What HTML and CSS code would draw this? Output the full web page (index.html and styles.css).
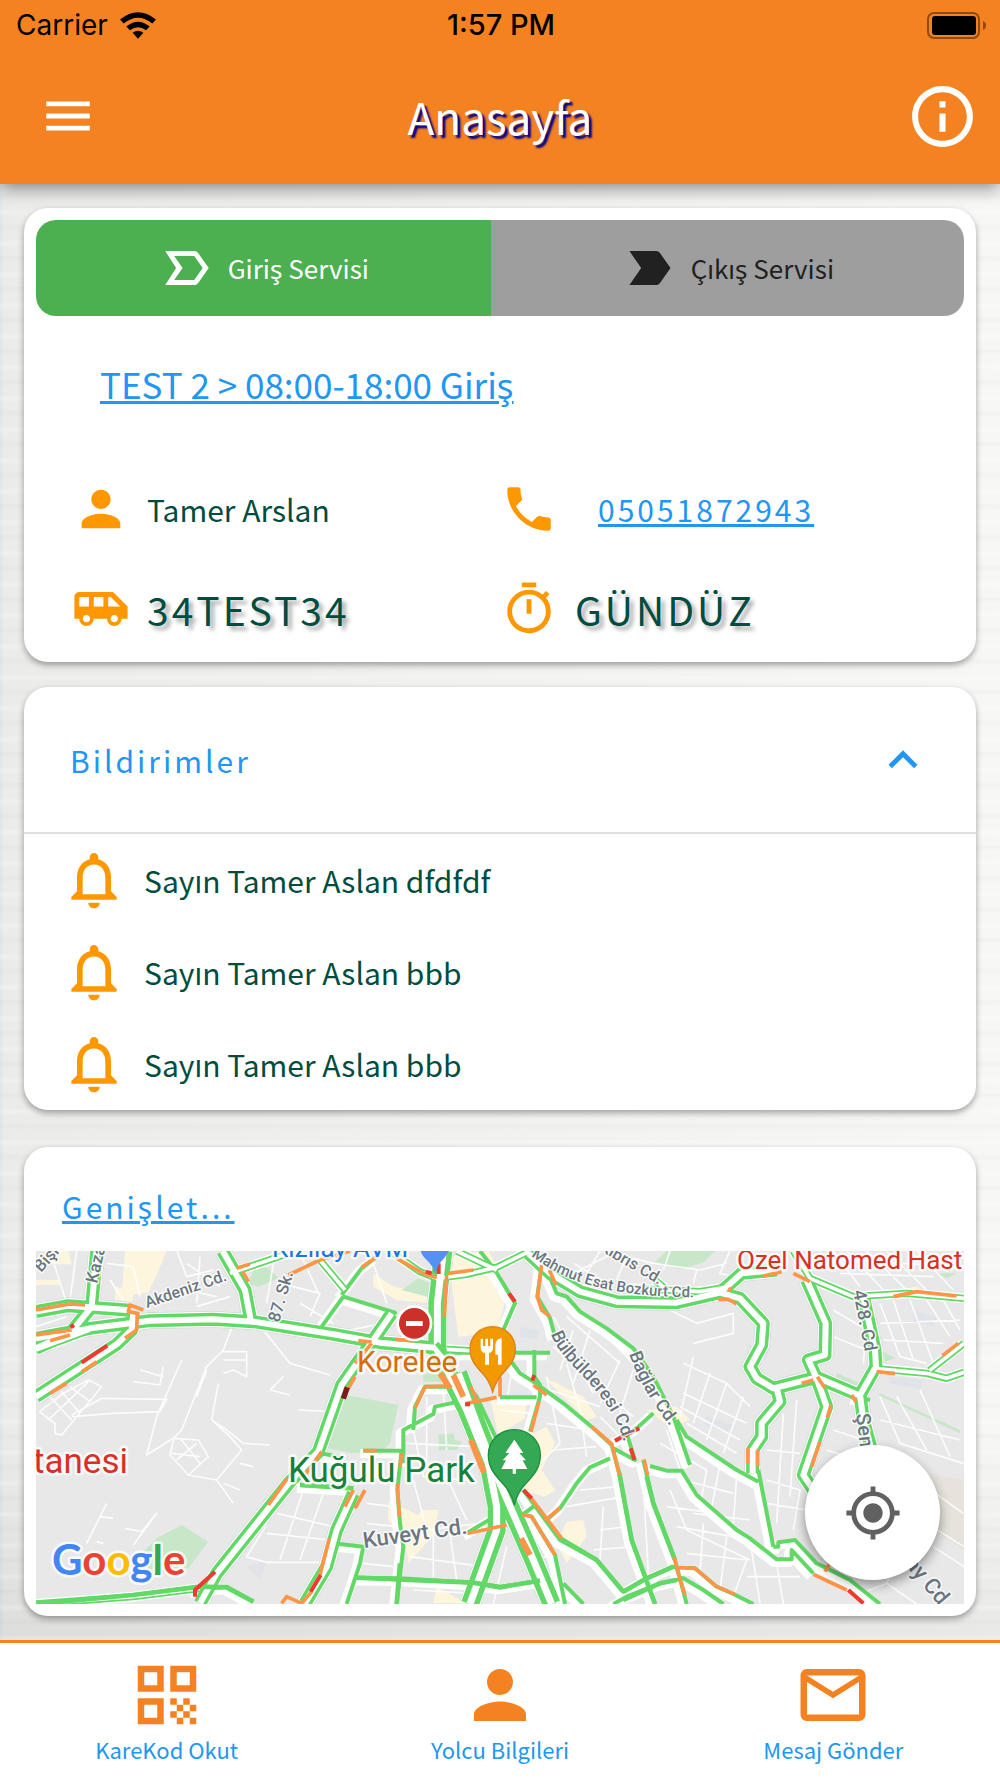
FILE: index.html
```html
<!DOCTYPE html>
<html lang="tr">
<head>
<meta charset="utf-8">
<meta name="viewport" content="width=device-width, initial-scale=1">
<title>Anasayfa</title>
<link rel="stylesheet" href="styles.css">
</head>
<body>
<header class="app-bar">
  <div class="status-bar">
    <div class="carrier">
      <span>Carrier</span>
      <svg class="wifi" viewBox="0 0 108 80" aria-hidden="true"><path d="M0 22Q54-22 108 22L97 34Q54 0 11 34ZM19 43Q54 15 89 43L78 54Q54 36 30 54ZM38 62Q54 50 70 62L54 80Z"/></svg>
    </div>
    <span class="clock">1:57 PM</span>
    <svg class="battery" viewBox="0 0 59 27" aria-hidden="true"><rect x="1" y="1" width="51" height="25" rx="6" fill="none" stroke="#000" stroke-opacity=".42" stroke-width="2"/><rect x="5" y="4" width="44" height="19" rx="3"/><path d="M56 9q3 1.500 3 4.500t-3 4.500z" fill-opacity=".42"/></svg>
  </div>
  <div class="toolbar">
    <button class="icon-button menu-button" type="button" aria-label="Menü"><svg class="icon" viewBox="0 0 24 24"><path d="M3 18h18v-2H3v2zm0-5h18v-2H3v2zm0-7v2h18V6H3z"/></svg></button>
    <h1 class="title">Anasayfa</h1>
    <button class="icon-button info-button" type="button" aria-label="Bilgi"><svg class="icon icon-large" viewBox="0 0 24 24"><path d="M11 7h2v2h-2zm0 4h2v6h-2zm1-9C6.480 2 2 6.480 2 12s4.480 10 10 10 10-4.480 10-10S17.520 2 12 2zm0 18c-4.410 0-8-3.590-8-8s3.590-8 8-8 8 3.590 8 8-3.590 8-8 8z"/></svg></button>
  </div>
</header>

<main class="content">
  <section class="card service-card">
    <div class="tabs">
      <button class="tab tab-entry" type="button"><svg class="icon" viewBox="0 0 24 24" aria-hidden="true"><path d="M15 5H3l4.500 7L3 19h12c.65 0 1.260-.31 1.630-.84L21 12l-4.370-6.160C16.260 5.310 15.650 5 15 5zm-.01 12h-8.300l3.500-5-3.500-5H15l3.500 5-3.510 5z"/></svg>Giriş Servisi</button>
      <button class="tab tab-exit" type="button"><svg class="icon" viewBox="0 0 24 24" aria-hidden="true"><path d="M3.500 18.990l11 .01c.67 0 1.270-.33 1.630-.84L20.500 12l-4.370-6.160c-.36-.51-.96-.84-1.630-.84l-11 .01L8.340 12 3.500 18.990z"/></svg>Çıkış Servisi</button>
    </div>
    <a class="route" href="#route">TEST 2 &gt; 08:00-18:00 Giriş</a>
    <div class="details">
      <div class="detail"><svg class="icon" viewBox="0 0 24 24" aria-hidden="true"><path d="M12 12c2.210 0 4-1.790 4-4s-1.790-4-4-4-4 1.790-4 4 1.790 4 4 4zm0 2c-2.670 0-8 1.340-8 4v2h16v-2c0-2.660-5.330-4-8-4z"/></svg><span>Tamer Arslan</span></div>
      <div class="detail"><svg class="icon" viewBox="0 0 24 24" aria-hidden="true"><path d="M6.540 3H4c-.55 0-1 .45-1 1 0 9.390 7.610 17 17 17 .55 0 1-.45 1-1v-3.490c0-.55-.45-1-1-1-1.240 0-2.450-.2-3.570-.57-.35-.12-.75-.03-1.020.24l-2.200 2.200c-2.830-1.440-5.150-3.750-6.590-6.590l2.200-2.200c.28-.28.36-.67.25-1.020C8.700 6.450 8.500 5.250 8.500 4c0-.55-.45-1-1-1z"/></svg><a class="phone" href="tel:05051872943">05051872943</a></div>
      <div class="detail"><svg class="icon" viewBox="0 0 24 24" aria-hidden="true"><path d="M17 5H3c-1.100 0-2 .89-2 2v9h2c0 1.650 1.340 3 3 3s3-1.350 3-3h5.500c0 1.650 1.340 3 3 3s3-1.350 3-3H23v-5l-6-6zM3 11V7h4v4H3zm3 6.500c-.83 0-1.500-.67-1.500-1.500s.67-1.500 1.500-1.500 1.500.67 1.500 1.500-.67 1.500-1.500 1.500zm7-6.500H9V7h4v4zm4.500 6.500c-.83 0-1.500-.67-1.500-1.500s.67-1.500 1.500-1.500 1.500.67 1.500 1.500-.67 1.500-1.500 1.500zM15 11V7h1l4 4h-5z"/></svg><span class="strong">34TEST34</span></div>
      <div class="detail"><svg class="icon" viewBox="0 0 24 24" aria-hidden="true"><path d="M15 1H9v2h6V1zm-4 13h2V8h-2v6zm8.030-6.610l1.420-1.420c-.43-.51-.9-.99-1.410-1.410l-1.420 1.420C16.070 4.740 14.120 4 12 4c-4.970 0-9 4.030-9 9s4.020 9 9 9 9-4.030 9-9c0-2.120-.74-4.070-1.970-5.610zM12 20c-3.870 0-7-3.130-7-7s3.130-7 7-7 7 3.130 7 7-3.130 7-7 7z"/></svg><span class="strong">GÜNDÜZ</span></div>
    </div>
  </section>

  <section class="card notices">
    <button class="notices-head" type="button" aria-expanded="true">Bildirimler<svg class="icon" viewBox="0 0 24 24" aria-hidden="true"><path d="M12 8l-6 6 1.410 1.410L12 10.830l4.590 4.580L18 14z"/></svg></button>
    <ul class="notice-list">
      <li class="notice"><svg class="icon bell" viewBox="0 0 24 24" aria-hidden="true"><path d="M12 22c1.100 0 2-.9 2-2h-4c0 1.100.89 2 2 2zm6-6v-5c0-3.070-1.640-5.640-4.500-6.320V4c0-.83-.67-1.500-1.500-1.500s-1.500.67-1.500 1.500v.68C7.630 5.360 6 7.920 6 11v5l-2 2v1h16v-1l-2-2zm-2 1H8v-6c0-2.480 1.510-4.500 4-4.500s4 2.020 4 4.500v6z"/></svg>Sayın Tamer Aslan dfdfdf</li>
      <li class="notice"><svg class="icon bell" viewBox="0 0 24 24" aria-hidden="true"><path d="M12 22c1.100 0 2-.9 2-2h-4c0 1.100.89 2 2 2zm6-6v-5c0-3.070-1.640-5.640-4.500-6.320V4c0-.83-.67-1.500-1.500-1.500s-1.500.67-1.500 1.500v.68C7.630 5.360 6 7.920 6 11v5l-2 2v1h16v-1l-2-2zm-2 1H8v-6c0-2.480 1.510-4.500 4-4.500s4 2.020 4 4.500v6z"/></svg>Sayın Tamer Aslan bbb</li>
      <li class="notice"><svg class="icon bell" viewBox="0 0 24 24" aria-hidden="true"><path d="M12 22c1.100 0 2-.9 2-2h-4c0 1.100.89 2 2 2zm6-6v-5c0-3.070-1.640-5.640-4.500-6.320V4c0-.83-.67-1.500-1.500-1.500s-1.500.67-1.500 1.500v.68C7.630 5.360 6 7.920 6 11v5l-2 2v1h16v-1l-2-2zm-2 1H8v-6c0-2.480 1.510-4.500 4-4.500s4 2.020 4 4.500v6z"/></svg>Sayın Tamer Aslan bbb</li>
    </ul>
  </section>

  <section class="card map-card">
    <a class="expand" href="#map">Genişlet...</a>
    <div class="map">
      <svg class="map-canvas" viewBox="0 0 928 353" preserveAspectRatio="xMidYMid slice" role="img" aria-label="Trafik haritası">
        <defs>
          <!-- both carriageways of each avenue -->
          <path id="avenues" d="M108 625L270 595 450 572 640 568 760 575 1000 613 1140 638 1320 655M290 363L275 530 215 605 108 655M108 545L205 527 390 541M400 545L395 600 350 643 108 800M668 363L735 480 753 575M1175 550L1120 630 1025 765 955 965 870 1055 650 1330 600 1420M1060 1090L1010 1200 980 1310 915 1420M1585 370L1650 430 1740 485 1850 515 2030 518 2160 488 2220 505 2290 580 2285 645 2250 710 2270 745 2320 775 2450 742 2575 795M2330 775L2340 815 2285 880 2285 920 2258 960 2258 1030M2420 450L2477 580 2475 675 2425 690 2450 745 2480 830 2410 1035 2440 1080M2160 488L2225 430 2330 420M2590 500L2625 660 2628 710 2580 795 2590 870 2612 950"/>
          <path id="lanes" d="M690 430L860 372M108 660L270 600M1170 363L1260 425 1310 445 1400 433 1490 412 1590 363M960 390L1035 480M1370 363L1490 420M2380 363L2430 445 2560 500 2720 490 2892 505M2620 715L2780 730 2840 745 2892 727M2788 722L2892 640M1340 658L1410 662M1890 475L2100 485 2190 470M108 1422L400 1400 600 1375M1965 450L2000 480"/>
          <!-- roads with a single green line -->
          <path id="roads" d="M1030 500L965 590M1025 495L1085 415 1130 380M1030 500L1185 548 1125 625M1440 363L1485 420 1545 520 1510 600M1375 730L1430 800 1500 950M1210 1000V900L1300 852 1305 830 1390 812M1240 900L1245 830 1275 770 1350 770M1090 962H1215M1205 960L1192 1080 1200 1180 1210 1250 1190 1422M900 1065L1060 1075M960 970L1020 980M1000 1240L1090 1250 1080 1300 1040 1422M1070 1343L1200 1345 1420 1358 1500 1370 1620 1352M580 1380L680 1370 760 1415M1340 668H1650M1603 660V740L1620 765V800L1590 905M1530 690L1560 730 1600 755 1690 820 1780 895 1835 945 1858 1030 1895 1230 1965 1422M1500 802H1610M1625 405L1612 500 1650 565 1665 620M1640 420L1670 490 1700 500 1740 545 1820 595 1900 655 1960 740 2020 860 2070 1005M2030 870L2060 920 2210 1020 2275 1055M2275 1020L2320 1250M1880 910L1905 990 1840 955M1930 990L1960 1120 2025 1290 2060 1422M1950 1008L2000 1022H2045L2090 1095 2210 1200 2250 1225 2330 1288H2375V1260L2440 1330M2320 1250H2335V1237L2385 1230 2450 1300 2550 1350 2640 1422M1960 850L1910 895 1845 932M1830 985L1770 1012 1730 1060 1680 1135 1640 1170M1570 1080L1680 1230 1790 1290 1870 1385 1940 1345 2020 1310 2085 1315 2150 1370 2200 1392 2260 1422M1840 1422L1880 1400 1980 1360 2050 1345 2110 1380 2170 1422M1565 1150L1595 1160 1665 1275 1695 1422M1690 1360L1750 1422M1500 1150L1400 1210M1560 1160L1600 1130M2560 800L2610 810"/>
          <path id="trunk" d="M1330 363L1312 520V660L1400 840 1465 1000 1490 1130V1200L1410 1422M1375 730L1430 880 1500 1060 1600 1290 1655 1422"/>
          <path id="esat" d="M495 5C530 31 575 49 690 46"/>
          <path id="bulbul" d="M515 83C525 116 578 138 590 200"/>
          <path id="baglar" d="M593 103C603 130 618 158 645 188"/>
        </defs>
        <rect width="928" height="353" fill="#e8e8e8"/>
        <g transform="scale(.33333) translate(-108 -363)" fill="none" stroke-linejoin="round">
          <g fill="#fdf5dc">
            <path d="M375 363h125l-25 60-30 65-80 10zM135 363h70l10 40h-80zM108 450h70v15h-70zM345 470l60 10-10 35-50-5zM1345 380l120-20 60 120-30 110-20 20-100 10zM1120 430l60 40 120 20-10 30-100-10-70-40zM1470 805h110l-5 60-80 50zM1580 920l60-30 25 50-40 80 40 60-30 20-70-20 30-70zM1700 1175l50-5 10 50-60 80-30-60zM1165 1115l90 40 10-15h50l-10 70-80 90-10-70-50-60zM1490 1020l70 10 10 40-60 20zM1940 840l90-10 40 40-60 20zM1630 740l120 60 40 60-30 10zM1310 1370l90 50h-100zM2700 480l50-10 20 15-60 10z"/>
          </g>
          <g fill="#c8e7c8">
            <path d="M1040 795l155 30-25 115-20 20-90 10-80-15zM765 410l40 5 30 30-60 25-30-10zM430 1265l40-40 75-40 80 50-60 80-120 20zM1965 395l35-32h145l-35 35-70 20zM1315 915l45-5 5 20 20 5-15 25h-53zM1270 730h60v25h-60zM1205 480l50-35 45 20v40zM2510 730l70 30v15l-70-30zM2640 790l240 110v10l-245-115zM2650 665l35 20-30 10zM440 545h35l-20 20zM1655 1422l10-80 20 80zM2810 430h60l-30 15z"/>
          </g>
          <path fill="#e0e4e8" d="M2660 740l110 10-10 30-90-20zM2120 860l80 25-10 25-75-25zM2240 640l70 20-10 25-60-15zM740 1310l60-20-20 60zM2740 540l70 20-10 30-60-15zM1560 590l60 10-10 30-50-10z"/>
          <path fill="#e7e3dc" d="M2790 1030l102 20v210l-120-80z"/>
          <!-- side streets -->
          <path stroke="#fff" stroke-width="5" stroke-opacity=".85" d="M118 845L190 790 265 750 305 770 185 915 165 910V880L118 845M145 870L265 755M150 800L215 870M180 780L240 850M210 770L270 815M215 855L305 805 500 808 480 845 340 850 215 860M545 690L470 860 440 975 520 925 545 900 620 710 670 660 700 580M520 925L595 930 625 980 565 1035 510 975 520 930M545 930L600 1000M530 990L590 940M515 970L600 980M655 760L635 870 690 920 725 960 700 990 650 1050 565 1035M635 870L680 900 730 940 810 945M650 1050L700 1120M670 1060L720 1080M720 1000L760 1010M665 665H740V740L700 720 670 730M670 690H740M770 575L870 700 990 735M810 780L850 740M810 780L870 795M895 840L1000 845M260 1240L320 1120M300 1160L340 1165M375 1195L425 1205 470 1150 400 1245M290 1235L310 1240M850 1070L790 1200 740 1280 800 1297H960M910 1080L840 1290M970 1090L900 1290M830 1150L1000 1190M800 1210L990 1230M530 360L560 440 640 420M560 480L650 500M600 380L590 520M690 500L590 530M820 400L800 520M900 370L960 500M840 460L960 490 930 560M900 520L1000 580M1120 400L1160 520M1050 600L1150 580M1240 900L1270 1040 1400 1050M1280 800V1000M1330 780L1340 960M1220 940L1430 950M1240 1050L1280 1200 1440 1180M1340 1040L1400 1170M1300 1200V1340M1350 1210L1370 1350M1230 1280L1450 1310M1240 1380L1420 1390M1100 1120L1180 1130M1100 1180L1190 1190M1090 1300L1180 1310M1500 840L1600 850M1540 690L1520 820M1640 740L1680 940 1600 1020M1700 700L1740 840 1760 980M1650 780L1800 830M1640 880L1770 900M1660 960L1790 950M1660 560L1780 790M1700 560L1860 700M1720 600L1680 720M1770 600L1720 760M1660 650L1900 860M1860 690L1800 820M1900 720L1850 880M1760 560L1990 790M1800 860L1900 960M1720 400L1840 470M1700 440L1840 370 1960 400 2100 420 2180 400M1800 363L1760 430M1880 380L1850 450M2010 363L1990 420M2190 363L2160 430 2200 440M2090 420L2080 460M2010 540L2090 580 2200 550V610L2080 640M2050 700L2180 760 2250 830M2080 680L2040 860M2130 730L2080 880M2180 760L2120 930M2230 800L2170 970M2050 790L2240 880M2040 830L2220 930M2060 880L2210 970M2000 900L2050 1050 2200 1090M1980 940L2120 1020 2100 1130M2160 1000L2130 1160M2210 1040L2200 1180M2080 1150L2250 1170M2300 1050L2400 1080 2380 1200M2300 960L2400 970M2350 850L2330 1180M2390 810L2370 1100M2300 1120L2420 1140 2440 1250M2500 363L2580 470M2540 363L2650 480M2600 363L2720 480M2450 400L2560 390 2700 400 2890 410M2660 363L2780 480M2750 363L2860 480M2520 430L2800 440M2640 520L2700 680 2780 700M2680 510L2740 690M2730 510L2800 700M2780 510L2850 620M2830 510L2880 600M2640 580L2880 570M2650 630L2830 640M2500 540L2600 600 2590 700M2500 620L2600 660M2640 800L2700 940 2890 1000M2690 800L2780 960M2760 780L2850 980M2640 870L2880 930M2660 950L2760 1030M2500 900L2590 930M2480 960L2600 1000M2750 1050L2890 1150M2780 1180L2892 1250M2800 1250L2892 1310M2560 1400L2660 1360 2750 1422M2660 1360L2700 1280M1810 1130L1800 1290M1870 1100L1700 1130M1740 1080L1860 1070M1800 1200L1880 1190M1780 1260L1900 1250M1930 1060L1950 1420M2010 1080L2060 1200 2250 1290M2000 1130L2150 1150M2030 1190L2200 1220M2060 1270L2240 1290 2200 1400M2110 1180L2100 1330M2180 1220L2160 1380M2250 1230L2280 1420M2330 1300L2350 1422M2240 1340L2400 1340M1960 1180L1990 1170M1580 1290L1640 1280M1520 1250L1480 1422M150 363L200 520M230 363L210 510M320 400L400 410 420 500M330 450L370 510M108 590L200 560M420 720L490 740M400 755L480 765 490 710M620 720L590 800M560 400L660 470"/>
          <g stroke="#c9cdd2" stroke-opacity=".6"><use href="#avenues" stroke-width="50"/><use href="#trunk" stroke-width="64"/></g>
          <g stroke="#fff">
            <use href="#avenues" stroke-width="46"/><use href="#lanes" stroke-width="30"/><use href="#trunk" stroke-width="60"/>
            <g transform="translate(-9 9)"><use href="#roads" stroke-width="28"/></g>
          </g>
          <g stroke="#62d867">
            <use href="#lanes" stroke-width="22"/><use href="#roads" stroke-width="12"/><use href="#avenues" stroke-width="39"/><use href="#trunk" stroke-width="54"/>
          </g>
          <g stroke="#fff">
            <use href="#lanes" stroke-width="11"/><use href="#avenues" stroke-width="18"/><use href="#trunk" stroke-width="21"/>
          </g>
          <path stroke="#62d867" stroke-width="14" d="M108 1422L400 1395 600 1370 680 1372 760 1415M900 1065L1060 1075M1070 1343L1420 1358 1500 1372 1620 1352M1190 1422L1200 1300M1870 1385L1940 1345 2020 1310M1870 1410L1980 1360 2030 1350M1858 1030L1895 1230 1965 1422M1940 1040L1960 1120 2025 1290M1680 1225L1790 1290 1870 1385M1310 640L1335 670"/>
          <path stroke="#ff9548" stroke-width="11" d="M108 540L210 522 255 525M108 615L215 600M150 632L210 615M150 790L200 760M245 725L290 695M375 625L410 600 412 550 385 545 390 525 430 540M728 425L745 455M865 435L960 390 1050 363M1085 412L1130 380M1190 385L1270 430 1310 443M1345 430L1420 420M710 415L750 402M1340 435L1333 560M1075 632L1115 636M1185 628L1240 632M1115 640L1065 700M1065 740L1045 775M965 965L915 1035M862 1045L805 1125M1060 1080L1035 1130M1095 1080L1065 1135M988 1225L960 1335M935 1385L905 1420 860 1400 845 1420M1090 962H1130M1205 970L1200 1010M1192 1060L1198 1160M1245 835L1275 770 1350 768M1412 770L1435 820M1400 820L1490 802M1500 740V800M1625 405L1612 500 1625 540 1650 560M1648 420L1668 465M1600 765L1640 795M1617 815L1593 905M1775 890L1835 942 1858 1035M1932 988L1943 1035M1590 1100L1685 1225M1680 1133L1635 1172M1565 1153L1595 1160 1665 1275M2022 1280L2030 1312 2085 1315 2150 1370 2205 1393M2030 1315L2055 1395M1405 1210L1520 1185M2155 508H2185L2210 522M2185 475L2195 482M2290 438L2345 425M2380 430L2430 455M2405 760L2440 750M2452 740L2475 775M2493 825L2482 862M2460 935L2435 1010M2243 955V1002M2273 960V1008M2555 795L2568 815M2680 500L2750 485 2870 498M2630 725L2685 731M2827 677L2875 640M2440 1333L2540 1380M2490 1300L2475 1325"/>
          <path stroke="#ff9548" stroke-width="18" d="M1320 730L1350 775M1360 735L1390 800M1413 930L1452 1028M1563 1225L1590 1275"/>
          <path stroke="#f2392f" stroke-width="12" d="M245 698L322 647M212 592L222 585M645 1325L585 1380V1400M962 1335L932 1385M1278 425L1295 430M1316 400V432M1395 823H1410M1527 490L1545 515M1603 735L1597 752M1845 932L1918 895M1892 955L1903 990M1570 1080L1595 1105M2545 1380L2590 1420"/>
          <path stroke="#7c1a22" stroke-width="16" d="M1042 772L1030 806"/>
        </g>
        <g class="map-label street">
          <text font-size="17" transform="translate(5 22) rotate(-48)">Bişke</text>
          <text font-size="17" transform="translate(61 33) rotate(-77)">Kazak.</text>
          <text font-size="16" transform="translate(111 57) rotate(-19)">Akdeniz Cd.</text>
          <text font-size="17" transform="translate(243 72) rotate(-74)">87. Sk.</text>
          <text font-size="16" transform="translate(563 -1) rotate(30)">Kıbrıs Cd.</text>
          <text font-size="15"><textPath href="#esat">Mahmut Esat Bozkurt Cd.</textPath></text>
          <text font-size="18"><textPath href="#bulbul">Bülbülderesi Cd.</textPath></text>
          <text font-size="18"><textPath href="#baglar">Bağlar Cd.</textPath></text>
          <text font-size="18" transform="translate(817 40) rotate(79)">428. Cd</text>
          <text font-size="20" transform="translate(820 163) rotate(83)">Şen</text>
          <text font-size="22" transform="translate(868 313) rotate(50)">ay Cd</text>
          <text font-size="22" transform="translate(328 297) rotate(-8)">Kuveyt Cd.</text>
        </g>
        <g class="map-label">
          <text x="236" y="6" font-size="26" fill="#1a73e8">Kızılay AVM</text>
          <text x="321" y="121" font-size="30" fill="#d56e0c">Korelee</text>
          <text x="252" y="231" font-size="35" fill="#188038">Kuğulu Park</text>
          <text x="92" y="222" font-size="35" fill="#d93025" text-anchor="end">tanesi</text>
          <text x="701" y="18" font-size="26" fill="#d93025">Özel Natomed Hast</text>
          <text class="brand" x="16" y="324" font-size="42"><tspan fill="#4285f4">G</tspan><tspan fill="#ea4335">o</tspan><tspan fill="#fbbc05">o</tspan><tspan fill="#4285f4">g</tspan><tspan fill="#34a853">l</tspan><tspan fill="#ea4335">e</tspan></text>
        </g>
        <g transform="scale(.33333) translate(-108 -363)">
          <path fill="#5491f5" d="M1262 363H1346Q1340 378 1322 396 1309 412 1306 432 1300 410 1286 396 1266 378 1262 363Z"/>
          <circle cx="1243" cy="580" r="54" fill="#fff"/><circle cx="1243" cy="580" r="46" fill="#cb3029"/><path fill="#fff" d="M1218 573h50v15h-50z"/>
          <path fill="#f29900" stroke="#d9821a" stroke-width="4" d="M1478 590c39 0 68 30 68 66 0 32-14 48-34 70-20 20-28 38-34 60-6-22-14-40-34-60-20-22-34-38-34-70 0-36 29-66 68-66z"/>
          <path fill="#fff" d="M1442 626h7v22h7v-22h8v22h7v-22h8v28q0 12-12 16v34h-12v-34q-13-4-13-16zM1505 624v80h-11v-30h-8v-30q2-18 19-20z"/>
          <path fill="#34a853" stroke="#1e8e3e" stroke-width="4" d="M1543 899c45 0 78 34 78 76 0 36-16 56-40 82-22 22-32 42-38 68-6-26-16-46-38-68-24-26-40-46-40-82 0-42 33-76 78-76z"/>
          <path fill="#fff" d="M1543 929l27 40h-12l20 22h-10l14 26h-34v14h-10v-14h-34l14-26h-10l20-22h-12z"/>
        </g>
      </svg>
      <button class="locate" type="button" aria-label="Konumum"><svg class="icon" viewBox="0 0 24 24"><path d="M12 8c-2.210 0-4 1.790-4 4s1.790 4 4 4 4-1.790 4-4-1.790-4-4-4zm8.940 3c-.46-4.170-3.770-7.480-7.940-7.940V1h-2v2.060C6.830 3.520 3.520 6.830 3.060 11H1v2h2.060c.46 4.170 3.770 7.480 7.940 7.940V23h2v-2.060c4.170-.46 7.480-3.770 7.940-7.940H23v-2h-2.060zM12 19c-3.870 0-7-3.130-7-7s3.130-7 7-7 7 3.130 7 7-3.130 7-7 7z"/></svg></button>
    </div>
  </section>
</main>

<nav class="bottom-nav">
  <a class="nav-item" href="#qr"><svg class="icon nav-icon" viewBox="0 0 24 24" aria-hidden="true"><path d="M3 11h8V3H3v8zm2-6h4v4H5V5zM3 21h8v-8H3v8zm2-6h4v4H5v-4zM13 3v8h8V3h-8zm6 6h-4V5h4v4zM19 19h2v2h-2zM13 13h2v2h-2zM15 15h2v2h-2zM13 17h2v2h-2zM15 19h2v2h-2zM17 17h2v2h-2zM17 13h2v2h-2zM19 15h2v2h-2z"/></svg>KareKod Okut</a>
  <a class="nav-item" href="#passengers"><svg class="icon nav-icon" viewBox="0 0 24 24" aria-hidden="true"><path d="M12 12c2.210 0 4-1.790 4-4s-1.790-4-4-4-4 1.790-4 4 1.790 4 4 4zm0 2c-2.670 0-8 1.340-8 4v2h16v-2c0-2.660-5.330-4-8-4z"/></svg>Yolcu Bilgileri</a>
  <a class="nav-item" href="#message"><svg class="icon nav-icon" viewBox="0 0 24 24" aria-hidden="true"><path d="M20 4H4c-1.100 0-1.990.9-1.990 2L2 18c0 1.100.9 2 2 2h16c1.100 0 2-.9 2-2V6c0-1.100-.9-2-2-2zm0 14H4V8l8 5 8-5v10zm-8-7L4 6h16l-8 5z"/></svg>Mesaj Gönder</a>
</nav>
</body>
</html>
```

FILE: styles.css
```css
* {
  box-sizing: border-box;
}

body {
  margin: 0;
  min-height: 100vh;
  display: flex;
  flex-direction: column;
  font-family: "Noto Sans CJK SC", "Noto Sans", sans-serif;
  font-size: 30px;
  line-height: 46px;
  color: #004d40;
  background:
    repeating-linear-gradient(180deg, transparent 0 7px, rgba(120, 120, 110, .03) 9px 11px, transparent 14px 23px, rgba(255, 255, 255, .25) 26px, transparent 31px),
    linear-gradient(180deg, rgba(0, 0, 0, 0) 80%, rgba(0, 0, 0, .06) 92%),
    linear-gradient(90deg, #dfe6e6 0, #ebebea 4px, #f1f1f0 50%, #f7f7f6 100%);
}

button {
  border: 0;
  padding: 0;
  background: none;
  font: inherit;
  color: inherit;
  cursor: pointer;
}

a {
  color: #2196f3;
}

.icon {
  display: block;
  flex: none;
  width: 58px;
  height: 58px;
  fill: currentColor;
}

.icon-large {
  width: 73px;
  height: 73px;
}

/* Header */
.app-bar {
  background: #f58220;
  box-shadow: 0 4px 16px rgba(0, 0, 0, .45);
}

.status-bar {
  display: grid;
  grid-template-columns: 1fr auto 1fr;
  align-items: center;
  height: 50px;
  padding: 0 14px 0 16px;
  font-family: Inter, sans-serif;
  font-size: 28px;
  line-height: 50px;
  color: #000;
}

.carrier {
  display: flex;
  align-items: center;
  gap: 12px;
}

.wifi {
  width: 36px;
  height: 27px;
}

.clock {
  font-size: 29px;
  font-weight: 500;
}

.battery {
  justify-self: end;
  width: 59px;
  height: 27px;
}

.toolbar {
  display: grid;
  grid-template-columns: 1fr auto 1fr;
  align-items: center;
  height: 134px;
  padding: 0 21px 2px;
  color: #fff;
}

.menu-button {
  justify-self: start;
  margin-left: 18px;
}

.info-button {
  justify-self: end;
}

.title {
  margin: 0;
  font-size: 44px;
  font-weight: 400;
  line-height: 64px;
  text-shadow: 3px 3px 2px #00008b;
}

/* Cards */
.content {
  flex: 1;
  display: flex;
  flex-direction: column;
  gap: 25px;
  padding: 24px;
}

.card {
  background: #fff;
  border-radius: 24px;
  box-shadow: 0 3px 6px rgba(0, 0, 0, .35);
}

.service-card {
  padding: 12px 12px 23px;
}

.tabs {
  display: grid;
  grid-template-columns: 49fr 51fr;
  height: 96px;
  border-radius: 20px;
  overflow: hidden;
}

.tab {
  display: flex;
  align-items: center;
  justify-content: center;
  gap: 12px;
  font-size: 26px;
}

.tab-entry {
  background: #4caf50;
  color: #fff;
}

.tab-exit {
  background: #9e9e9e;
  color: #212121;
}

.route {
  display: block;
  width: fit-content;
  margin: 42px 0 69px 64px;
  font-size: 35px;
  line-height: 52px;
}

.details {
  display: grid;
  grid-template-columns: 1fr 1fr;
  row-gap: 40px;
  padding: 0 36px;
}

.detail {
  display: flex;
  align-items: center;
  gap: 17px;
  height: 60px;
}

.detail .icon,
.bell {
  color: #ff9800;
}

.phone {
  margin-left: 23px;
  letter-spacing: 3px;
}

.strong {
  font-size: 39px;
  letter-spacing: 3px;
  text-shadow: 4px 4px 4px rgba(0, 0, 0, .35);
}

.notices-head {
  display: flex;
  align-items: center;
  justify-content: space-between;
  width: 100%;
  height: 147px;
  padding: 0 44px 0 46px;
  border-bottom: 2px solid #e0e0e0;
  color: #2196f3;
  letter-spacing: 3px;
}

.notice-list {
  margin: 0;
  padding: 0;
  list-style: none;
}

.notice {
  display: flex;
  align-items: center;
  gap: 16px;
  height: 92px;
  padding: 0 36px;
}

.bell {
  width: 68px;
  height: 68px;
}

/* Map */
.map-card {
  margin-top: 12px;
  padding: 36px 12px 12px;
}

.expand {
  display: block;
  width: fit-content;
  margin: 0 0 22px 26px;
  letter-spacing: 3px;
}

.map {
  position: relative;
}

.map-canvas {
  display: block;
  width: 100%;
  height: 353px;
}

.map-label {
  font-family: Roboto, sans-serif;
  paint-order: stroke;
  stroke: rgba(255, 255, 255, .8);
  stroke-width: 5px;
  stroke-linejoin: round;
}

.street {
  fill: #6b7680;
  font-weight: 500;
  stroke-width: 3px;
}

.brand {
  font-family: Lato, sans-serif;
  font-weight: 700;
}

.locate {
  position: absolute;
  right: 24px;
  bottom: 24px;
  display: grid;
  place-items: center;
  width: 135px;
  height: 135px;
  border-radius: 50%;
  background: #fff;
  color: #616161;
  box-shadow: 0 5px 12px rgba(0, 0, 0, .4);
}

/* Bottom navigation */
.bottom-nav {
  display: grid;
  grid-template-columns: repeat(3, 1fr);
  height: 138px;
  padding-top: 13px;
  border-top: 3px solid #f58220;
  background: #fff;
}

.nav-item {
  display: flex;
  flex-direction: column;
  align-items: center;
  font-size: 22px;
  line-height: 30px;
  text-decoration: none;
}

.nav-icon {
  width: 78px;
  height: 78px;
  color: #f58220;
}
```
